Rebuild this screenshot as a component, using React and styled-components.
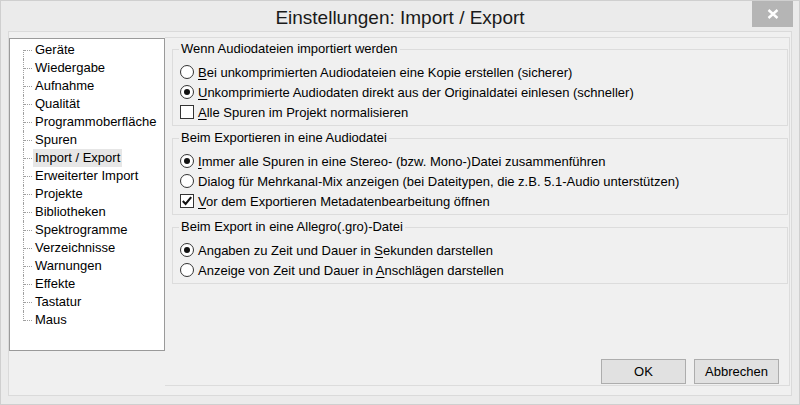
import React from "react";
import styled, { createGlobalStyle } from "styled-components";

const GlobalStyle = createGlobalStyle`
  html, body {
    margin: 0;
    padding: 0;
    background: #ebebeb;
  }
  body {
    font-family: "Liberation Sans", Arial, sans-serif;
    font-size: 13px;
    color: #000;
  }
`;

const Window = styled.div`
  width: 800px;
  height: 405px;
  box-sizing: border-box;
  border: 1px solid #cfcfcf;
  background: #ebebeb;
  display: flex;
  flex-direction: column;
`;

const TitleBar = styled.div`
  height: 30px;
  display: grid;
  grid-template-columns: 1fr auto 1fr;
  align-items: start;
`;

const Title = styled.div`
  grid-column: 2;
  font-size: 19px;
  line-height: 22px;
  padding-top: 6px;
  color: #1a1a1a;
  white-space: nowrap;
`;

const CloseButton = styled.div`
  grid-column: 3;
  justify-self: end;
  width: 41px;
  height: 26px;
  margin-right: 6px;
  background: #b5b5b5;
  display: flex;
  align-items: center;
  justify-content: center;
`;

const Client = styled.div`
  flex: 1;
  margin: 0 7px 8px 7px;
  border: 1px solid #dadada;
  background: #f0f0f0;
  display: flex;
  align-items: stretch;
  padding: 5px 1px 9px 0;
`;

const TreeBox = styled.div`
  width: 156px;
  height: 313px;
  box-sizing: border-box;
  margin-top: 1px;
  border: 1px solid #9a9a9a;
  background: #fff;
  padding-top: 2px;
`;

const TreeList = styled.ul`
  list-style: none;
  margin: 0;
  padding: 0;
`;

const TreeItem = styled.li`
  position: relative;
  height: 18px;
  padding-left: 23px;
  display: flex;
  align-items: center;

  &::before {
    content: "";
    position: absolute;
    left: 14px;
    top: 9px;
    width: 8px;
    border-top: 1px dotted #a0a0a0;
  }

  &::after {
    content: "";
    position: absolute;
    left: 13px;
    top: ${(p) => (p.$first ? "9px" : "0")};
    height: ${(p) => (p.$first ? "9px" : p.$last ? "10px" : "18px")};
    border-left: 1px dotted #a0a0a0;
  }
`;

const TreeLabel = styled.span`
  padding: 0 2px;
  line-height: 18px;
  background: ${(p) => (p.$selected ? "#e6e6e6" : "transparent")};
  white-space: nowrap;
`;

const Panel = styled.div`
  flex: 1;
  border-top: 1px solid #dcdcdc;
  border-right: 1px solid #dcdcdc;
  border-bottom: 1px solid #dcdcdc;
  padding: 3px 1px 0 7px;
  display: flex;
  flex-direction: column;
  gap: 4px;
`;

const Group = styled.fieldset`
  margin: 0;
  min-width: 0;
  border: 1px solid #dcdcdc;
  padding: 5px 8px 3px 6px;
`;

const Legend = styled.legend`
  padding: 0 2px;
  line-height: 16px;
  font-size: 13px;
`;

const Option = styled.label`
  height: 20px;
  display: flex;
  align-items: center;
  gap: 4px;
  padding-left: 1px;
  white-space: nowrap;
`;

const Radio = styled.span`
  width: 14px;
  height: 14px;
  box-sizing: border-box;
  border-radius: 50%;
  border: 1px solid #333;
  background: #fff;
  display: flex;
  align-items: center;
  justify-content: center;
  flex-shrink: 0;

  &::after {
    content: "";
    width: 6px;
    height: 6px;
    border-radius: 50%;
    background: ${(p) => (p.$checked ? "#111" : "transparent")};
  }
`;

const Check = styled.span`
  width: 14px;
  height: 14px;
  box-sizing: border-box;
  border: 1px solid #333;
  background: #fff;
  display: flex;
  align-items: center;
  justify-content: center;
  flex-shrink: 0;
`;

const Footer = styled.div`
  margin-top: auto;
  display: flex;
  justify-content: flex-end;
  gap: 8px;
  padding: 0 9px 1px 0;
`;

const Button = styled.button`
  width: 85px;
  height: 25px;
  box-sizing: border-box;
  border: 1px solid #adadad;
  background: #e1e1e1;
  font-family: "Liberation Sans", Arial, sans-serif;
  font-size: 13px;
  color: #000;
  padding: 0;
`;

const Key = styled.span`
  text-decoration: underline;
  text-underline-offset: 2px;
`;

const treeItems = [
  "Geräte",
  "Wiedergabe",
  "Aufnahme",
  "Qualität",
  "Programmoberfläche",
  "Spuren",
  "Import / Export",
  "Erweiterter Import",
  "Projekte",
  "Bibliotheken",
  "Spektrogramme",
  "Verzeichnisse",
  "Warnungen",
  "Effekte",
  "Tastatur",
  "Maus",
];

function Choice({ type, checked, text }) {
  // text: [before, key, after]
  const [pre, key, post] = text;
  return (
    <Option>
      {type === "radio" ? (
        <Radio $checked={checked} />
      ) : (
        <Check>
          {checked && (
            <svg width="12" height="12" viewBox="0 0 12 12">
              <path d="M1.8 6 L4.6 9 L10.2 2.2" fill="none" stroke="#111" strokeWidth="2.1" />
            </svg>
          )}
        </Check>
      )}
      <span>
        {pre}
        {key && <Key>{key}</Key>}
        {post}
      </span>
    </Option>
  );
}

export default function App() {
  return (
    <>
      <GlobalStyle />
      <Window>
        <TitleBar>
          <Title>Einstellungen: Import / Export</Title>
          <CloseButton>
            <svg width="12" height="10" viewBox="0 0 12 10">
              <path d="M1.5 1 L10.5 9 M10.5 1 L1.5 9" stroke="#fff" strokeWidth="2.4" />
            </svg>
          </CloseButton>
        </TitleBar>
        <Client>
          <TreeBox>
            <TreeList>
              {treeItems.map((t, i) => (
                <TreeItem key={t} $first={i === 0} $last={i === treeItems.length - 1}>
                  <TreeLabel $selected={t === "Import / Export"}>{t}</TreeLabel>
                </TreeItem>
              ))}
            </TreeList>
          </TreeBox>
          <Panel>
            <Group>
              <Legend>Wenn Audiodateien importiert werden</Legend>
              <Choice type="radio" text={["", "B", "ei unkomprimierten Audiodateien eine Kopie erstellen (sicherer)"]} />
              <Choice type="radio" checked text={["", "U", "nkomprimierte Audiodaten direkt aus der Originaldatei einlesen (schneller)"]} />
              <Choice type="check" text={["", "A", "lle Spuren im Projekt normalisieren"]} />
            </Group>
            <Group>
              <Legend>Beim Exportieren in eine Audiodatei</Legend>
              <Choice type="radio" checked text={["", "I", "mmer alle Spuren in eine Stereo- (bzw. Mono-)Datei zusammenführen"]} />
              <Choice type="radio" text={["Dialog für Mehrkanal-Mix anzeigen (bei Dateitypen, die z.B. 5.1-Audio unterstützen)", "", ""]} />
              <Choice type="check" checked text={["", "V", "or dem Exportieren Metadatenbearbeitung öffnen"]} />
            </Group>
            <Group>
              <Legend>Beim Export in eine Allegro(.gro)-Datei</Legend>
              <Choice type="radio" checked text={["Angaben zu Zeit und Dauer in ", "S", "ekunden darstellen"]} />
              <Choice type="radio" text={["Anzeige von Zeit und Dauer in ", "A", "nschlägen darstellen"]} />
            </Group>
            <Footer>
              <Button>OK</Button>
              <Button>Abbrechen</Button>
            </Footer>
          </Panel>
        </Client>
      </Window>
    </>
  );
}
